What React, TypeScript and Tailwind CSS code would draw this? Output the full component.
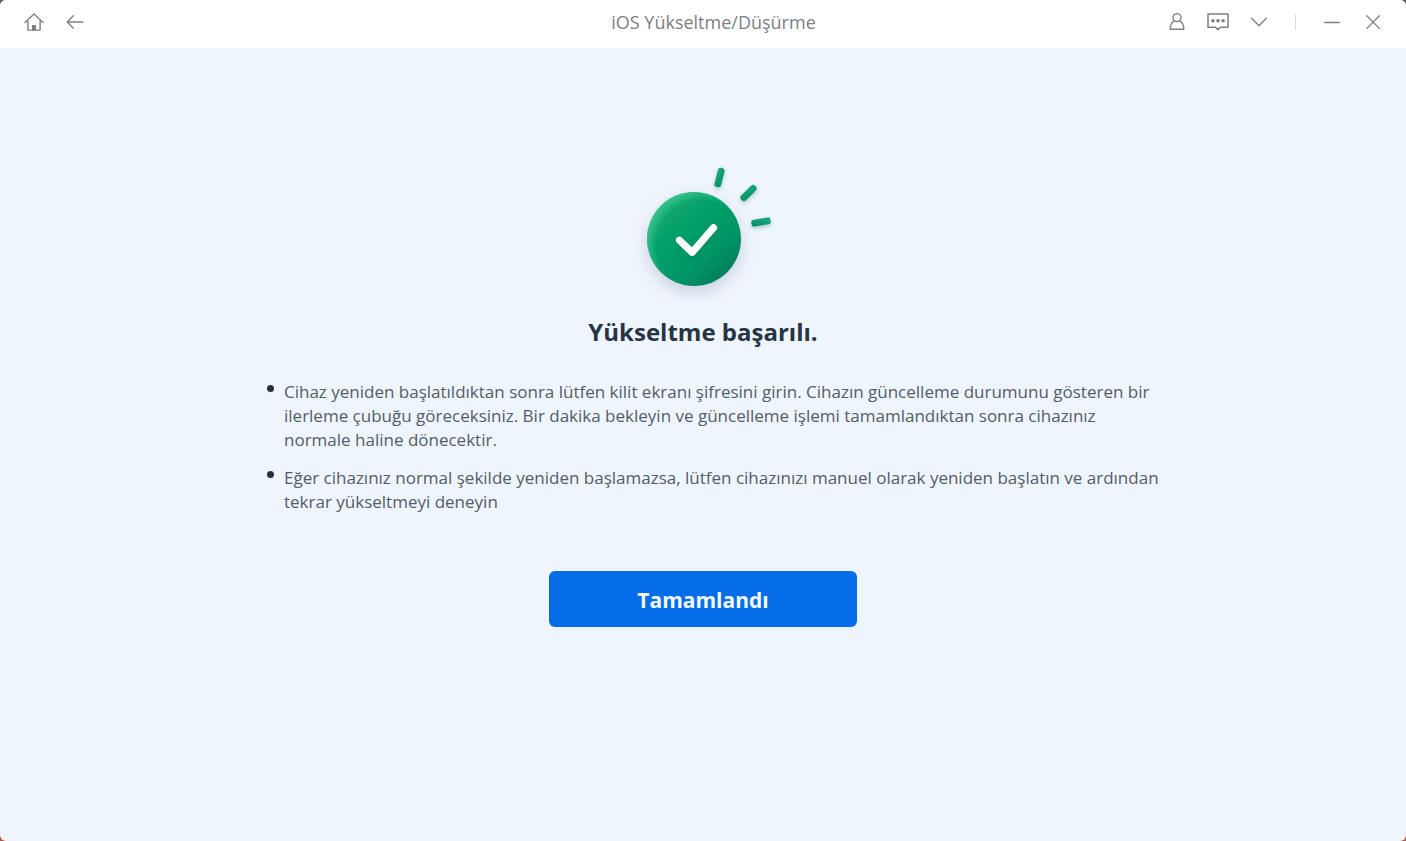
import type { ReactNode } from "react";

function HomeIcon() {
  return (
    <svg width="20" height="20" viewBox="0 0 20 20" fill="none" stroke="currentColor" strokeWidth="1.4" aria-hidden="true">
      <path d="M1 10.4 10 2l9 8.4M3.9 9.2v8.9h12.2V9.2" strokeLinejoin="round" strokeLinecap="round" />
      <path d="M8.7 17.6v-4h2.6v4z" fill="currentColor" />
    </svg>
  );
}

function BackIcon() {
  return (
    <svg width="20" height="20" viewBox="0 0 20 20" fill="none" stroke="currentColor" strokeWidth="1.3" strokeLinecap="round" strokeLinejoin="round" aria-hidden="true">
      <path d="M17.8 10H2.5M8.3 3.7 2.2 10l6.1 6.2" />
    </svg>
  );
}

function UserIcon() {
  return (
    <svg width="20" height="20" viewBox="0 0 20 20" fill="none" stroke="currentColor" strokeWidth="1.4" strokeLinejoin="round" aria-hidden="true">
      <circle cx="10" cy="5.6" r="4" />
      <path d="M7.4 8.8C4.6 10.1 3.2 12.8 3.2 17.3h13.6c0-4.5-1.4-7.2-4.2-8.5" />
    </svg>
  );
}

function MessageIcon() {
  return (
    <svg width="24" height="20" viewBox="0 0 24 20" fill="none" stroke="currentColor" strokeWidth="1.5" strokeLinejoin="round" aria-hidden="true">
      <path d="M2 2h20v13.2h-7.6L12 17.6l-2.5-2.4H2z" />
      <g fill="currentColor" stroke="none">
        <circle cx="6.9" cy="8.8" r="1.8" />
        <circle cx="12" cy="8.8" r="1.8" />
        <circle cx="17.1" cy="8.8" r="1.8" />
      </g>
    </svg>
  );
}

function ChevronIcon() {
  return (
    <svg width="20" height="20" viewBox="0 0 20 20" fill="none" stroke="currentColor" strokeWidth="1.3" strokeLinecap="round" strokeLinejoin="round" aria-hidden="true">
      <path d="m2.6 6.3 7.4 7.4 7.4-7.4" />
    </svg>
  );
}

function MinimizeIcon() {
  return (
    <svg width="20" height="20" viewBox="0 0 20 20" fill="none" stroke="currentColor" strokeWidth="1.3" strokeLinecap="round" aria-hidden="true">
      <path d="M2.6 10.5h14.8" />
    </svg>
  );
}

function CloseIcon() {
  return (
    <svg width="20" height="20" viewBox="0 0 20 20" fill="none" stroke="currentColor" strokeWidth="1.3" strokeLinecap="round" aria-hidden="true">
      <path d="m3.8 3.8 12.6 12.6M16.4 3.8 3.8 16.4" />
    </svg>
  );
}

function SuccessMark() {
  return (
    <svg width="160" height="144" viewBox="0 0 160 144" fill="none" role="img" aria-label="Başarılı">
      <defs>
        <linearGradient id="disc" x1="34" y1="42" x2="106" y2="122" gradientUnits="userSpaceOnUse">
          <stop offset="0" stopColor="#0aa86e" />
          <stop offset="0.4" stopColor="#059f69" />
          <stop offset="0.7" stopColor="#059566" />
          <stop offset="1" stopColor="#067a5c" />
        </linearGradient>
        <radialGradient id="rim" cx="79" cy="88" r="58" gradientUnits="userSpaceOnUse">
          <stop offset="0.78" stopColor="#4fd3a0" stopOpacity="0" />
          <stop offset="1" stopColor="#4fd3a0" stopOpacity="0.7" />
        </radialGradient>
        <linearGradient id="ray" x1="0" y1="0" x2="1" y2="1">
          <stop offset="0" stopColor="#18ae7b" />
          <stop offset="1" stopColor="#0b8a65" />
        </linearGradient>
        <filter id="glow" x="-40%" y="-40%" width="180%" height="180%">
          <feDropShadow dx="0" dy="6" stdDeviation="8" floodColor="#8394bd" floodOpacity="0.38" />
        </filter>
        <filter id="soft" x="-40%" y="-40%" width="180%" height="180%">
          <feDropShadow dx="0" dy="2" stdDeviation="2" floodColor="#04664a" floodOpacity="0.3" />
        </filter>
      </defs>
      <circle cx="71" cy="81" r="47" fill="url(#disc)" filter="url(#glow)" />
      <circle cx="71" cy="81" r="47" fill="url(#rim)" />
      <path d="M56.4 82.2 69.2 94.4 90.6 69.6" stroke="#fff" strokeWidth="7" strokeLinecap="round" strokeLinejoin="round" filter="url(#soft)" />
      <g filter="url(#soft)">
        <rect x="-3.4" y="-9.8" width="6.8" height="19.6" rx="2.8" transform="translate(96.5 19.5) rotate(14)" fill="url(#ray)" />
        <rect x="-3.4" y="-9.8" width="6.8" height="19.6" rx="2.8" transform="translate(125.5 35) rotate(45)" fill="url(#ray)" />
        <rect x="-3.4" y="-9.8" width="6.8" height="19.6" rx="2.8" transform="translate(138 64) rotate(80)" fill="url(#ray)" />
      </g>
    </svg>
  );
}

function IconButton({ label, children }: { label: string; children: ReactNode }) {
  return (
    <button type="button" aria-label={label} className="flex h-8 w-6 items-center justify-center">
      {children}
    </button>
  );
}

const notes = [
  "Cihaz yeniden başlatıldıktan sonra lütfen kilit ekranı şifresini girin. Cihazın güncelleme durumunu gösteren bir ilerleme çubuğu göreceksiniz. Bir dakika bekleyin ve güncelleme işlemi tamamlandıktan sonra cihazınız normale haline dönecektir.",
  "Eğer cihazınız normal şekilde yeniden başlamazsa, lütfen cihazınızı manuel olarak yeniden başlatın ve ardından tekrar yükseltmeyi deneyin",
];

export default function App() {
  return (
    <div className="min-h-screen bg-linear-to-b from-[#5c5c62] to-[#b0584f] font-['Open_Sans','Noto_Sans',sans-serif]">
      <div className="flex min-h-screen flex-col overflow-hidden rounded-md bg-[#eff5fc]">
        <header className="grid h-12 grid-cols-[1fr_auto_1fr] items-center bg-white pr-[21px] pb-1 pl-[22px] text-[#7c8086]">
          <nav className="flex gap-[17px]">
            <IconButton label="Ana sayfa"><HomeIcon /></IconButton>
            <IconButton label="Geri"><BackIcon /></IconButton>
          </nav>
          <h1 className="pl-5 text-lg text-[#7c8087]">iOS Yükseltme/Düşürme</h1>
          <div className="flex items-center justify-end gap-[17px]">
            <IconButton label="Hesap"><UserIcon /></IconButton>
            <IconButton label="Geri bildirim"><MessageIcon /></IconButton>
            <IconButton label="Menü"><ChevronIcon /></IconButton>
            <div className="mx-[7px] h-4 w-px bg-[#dcdee1]" />
            <IconButton label="Küçült"><MinimizeIcon /></IconButton>
            <IconButton label="Kapat"><CloseIcon /></IconButton>
          </div>
        </header>
        <main className="flex flex-1 flex-col items-center px-6 pt-[110px]">
          <SuccessMark />
          <h2 className="mt-2.5 text-2xl leading-10 font-bold text-[#263444]">Yükseltme başarılı.</h2>
          <ul className="mt-7 flex w-full max-w-[912px] flex-col gap-3.5 pl-5 text-[17px] leading-6 text-[#535d69]">
            {notes.map((note) => (
              <li key={note} className="flex gap-2.5">
                <span className="mt-[5px] size-[7px] shrink-0 rounded-full bg-[#263040]" />
                <p>{note}</p>
              </li>
            ))}
          </ul>
          <button type="button" className="mt-[57px] h-14 w-full max-w-[308px] rounded-md bg-[#056de8] pt-1 text-[21px] font-bold text-[#f2faff]">
            Tamamlandı
          </button>
        </main>
      </div>
    </div>
  );
}
